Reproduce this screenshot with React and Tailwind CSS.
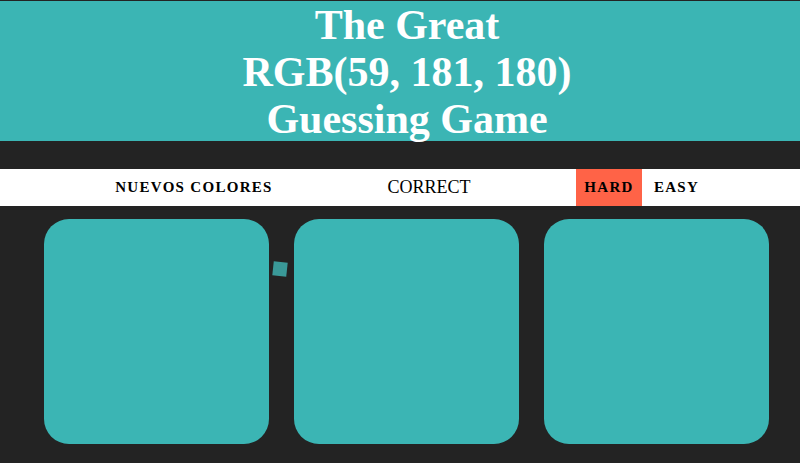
import React from 'react';

const serif = { fontFamily: '"Liberation Serif", "DejaVu Serif", serif' };

const App = () => {
    const squares = ['#3bb5b4', '#3bb5b4', '#3bb5b4'];

    return (
        <div className="w-[800px] h-[463px] bg-[#232323] overflow-hidden relative" style={serif}>
            <h1 className="mt-px h-[140px] pl-[14px] pt-px bg-[#3bb5b4] text-white text-center font-bold text-[42px] leading-[47px]">
                The Great
                <br />
                RGB(59, 181, 180)
                <br />
                Guessing Game
            </h1>

            <div className="mt-[28px] h-[37px] bg-white flex items-stretch justify-center pl-[14px]">
                <button className="w-[176px] text-[15px] font-bold uppercase tracking-[1.3px] text-black">
                    Nuevos Colores
                </button>
                <span className="w-[294px] flex items-center justify-center text-[18px] text-black">CORRECT</span>
                <button className="w-[66px] bg-[#ff6347] text-[15px] font-bold uppercase tracking-[1.3px] text-black">
                    Hard
                </button>
                <button className="w-[66px] pl-[3px] text-[15px] font-bold uppercase tracking-[1.3px] text-black">
                    Easy
                </button>
            </div>

            <div className="mt-[13px] ml-[44px] flex gap-[25px]">
                {squares.map((c, i) => (
                    <div key={i} className="w-[225px] h-[225px] rounded-[25px]" style={{ backgroundColor: c }} />
                ))}
            </div>

            <div className="absolute left-[273px] top-[262px] w-[14px] h-[14px] bg-[#3a9998] rotate-[6deg]" />
        </div>
    );
};

export default App;
